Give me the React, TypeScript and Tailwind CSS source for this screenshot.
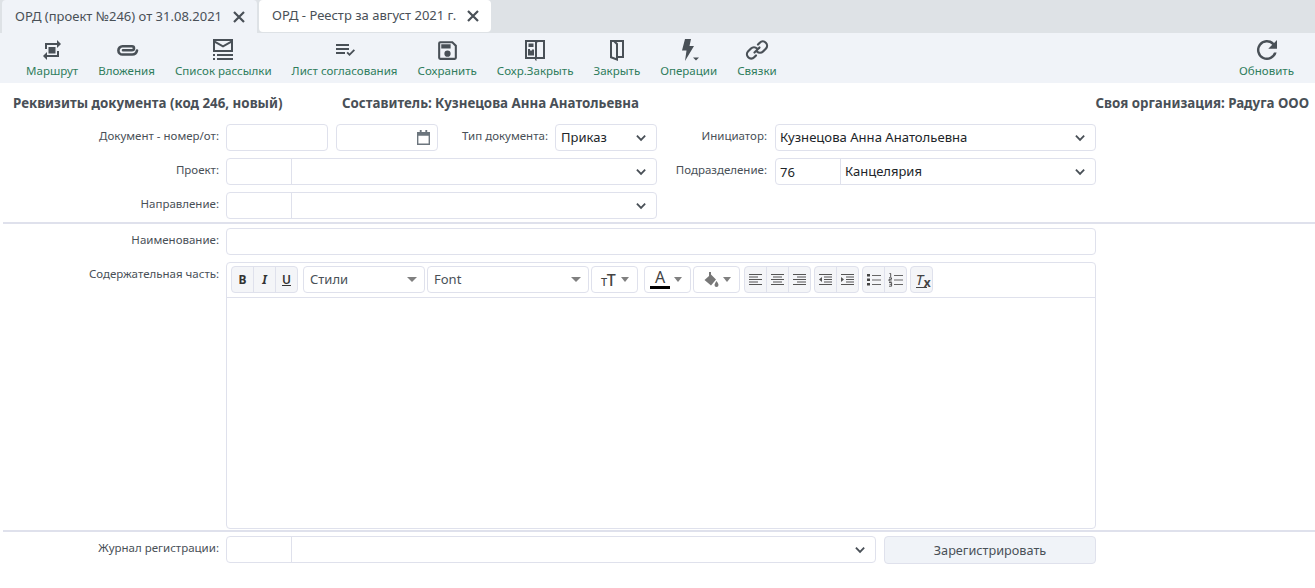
import React from "react";

const ico = "fill-[#495057]";
const I = ({ children, s = 24 }: { children: React.ReactNode; s?: number }) => (
  <svg viewBox="0 0 24 24" width={s} height={s} className={ico}>{children}</svg>
);

const icons: Record<string, React.ReactNode> = {
  route: <I><path d="M7 7h10v3l4-4-4-4v3H5v6h2V7zm10 10H7v-3l-4 4 4 4v-3h12v-6h-2v4z" /><rect x="8.500" y="9" width="7" height="6.500" /></I>,
  clip: (
    <svg viewBox="0 0 24 24" width={24} height={24} fill="none" stroke="#495057" strokeWidth="2.600" strokeLinecap="round">
      <path d="M8 12.300h9a2 2 0 0 0 0-4H7.500a4 4 0 0 0 0 8.200h9.500a5 5 0 0 0 5-4" />
    </svg>
  ),
  list: (
    <svg viewBox="0 0 24 24" width={24} height={24} className={ico}>
      <path fillRule="evenodd" d="M2 1h20v13H2V1zm2 4v7h16V5l-8 4.500L4 5zm.5-2L12 7.200 19.500 3h-15z" />
      <rect x="2" y="16" width="2" height="2" /><rect x="6" y="16" width="16" height="2" />
      <rect x="2" y="20" width="2" height="2" /><rect x="6" y="20" width="16" height="2" />
    </svg>
  ),
  check: <I><path d="M3 6h13v2H3V6zm0 4h13v2H3v-2zm0 4h9v2H3v-2zm19-1.500L16.500 18l-3-3 1.300-1.300 1.700 1.700 4.200-4.200 1.300 1.300z" /></I>,
  save: <I s={25}><path d="M17 3H5a2 2 0 0 0-2 2v14a2 2 0 0 0 2 2h14a2 2 0 0 0 2-2V7l-4-4zm2 16H5V5h11.170L19 7.830V19zm-7-7a3 3 0 1 0 0 6 3 3 0 0 0 0-6zM6 6h9v4H6z" /></I>,
  saveClose: <I><path fillRule="evenodd" d="M2 2h20v19h-8.500v2L12 22V21H2V2zm2 2v15h8V4H4zm10 .5V19h6V4h-4.500L14 4.500z M5.500 5.500H10.500V9H5.500z M5 11h2v1.500H9v-1h2v6H5v-6z" /></I>,
  close: <I><path fillRule="evenodd" d="M5 2h14v18h-6v3l-8-3V2zm2 2v14.600l4 1.500V6.500L8.500 4H7zm4.500 0L13 5.500V18h4V4h-5.500z" /></I>,
  ops: (
    <svg viewBox="0 0 24 24" width={24} height={24} className={ico}>
      <path d="M8 1h6l-1.500 7H17L8 23l1.500-10.500H5z" /><path d="M16 19.500h6l-3 3z" />
    </svg>
  ),
  link: (
    <svg viewBox="0 0 24 24" width={24} height={24} fill="none" stroke="#495057" strokeWidth="2.200" strokeLinecap="round">
      <path d="M9.500 14.500l5-5" />
      <path d="M13 6.500l1.800-1.800a4.200 4.200 0 0 1 6 6L18 13.500a4.200 4.200 0 0 1-6 0" />
      <path d="M11 17.500l-1.800 1.800a4.200 4.200 0 0 1-6-6L6 10.500a4.200 4.200 0 0 1 6 0" />
    </svg>
  ),
  refresh: <svg viewBox="0 0 24 24" width={30} height={30} className={`${ico} shrink-0`}><path d="M17.650 6.350A8 8 0 1 0 19.700 14h-2.100a6 6 0 1 1-1.400-6.200L13 11h7V4l-2.350 2.350z" /></svg>,
};

const Tool = ({ icon, label }: { icon: string; label: string }) => (
  <div className="flex flex-col items-center">
    <div className="h-[26px] flex items-center justify-center">{icons[icon]}</div>
    <div className="text-[11.560px] leading-[15px] text-[#2f7d5c] whitespace-nowrap">{label}</div>
  </div>
);

const X = () => (
  <svg viewBox="0 0 12 12" width={12} height={12} fill="none" stroke="#495057" strokeWidth="2.200"><path d="M1 1l10 10M11 1L1 11" /></svg>
);

const Chevron = () => (
  <svg viewBox="0 0 12 8" width={11} height={8} fill="none" stroke="#495057" strokeWidth="2" className="shrink-0"><path d="M1 1.500l4.500 4.500 4.500-4.500" /></svg>
);

const box = "h-[27px] bg-white border border-[#dfe1ec] rounded-[4px]";

const Label = ({ w, children }: { w: string; children: React.ReactNode }) => (
  <div className={`${w} shrink-0 text-right text-[11.500px] leading-[24px] text-[#495057] whitespace-nowrap`}>{children}</div>
);

const Combo = ({ w, code, value }: { w: string; code?: string; value?: string }) => (
  <div className={`${box} ${w} flex items-center pr-[9px] text-[13px] text-[#212529] shrink-0`}>
    <div className="w-[65px] h-full border-r border-[#dfe1ec] pl-[4px] leading-[27px] shrink-0">{code}</div>
    <div className="flex-1 pl-[4px] leading-[27px]">{value}</div>
    <Chevron />
  </div>
);

const Drop = ({ w, children }: { w: string; children: React.ReactNode }) => (
  <div className={`${w} h-[27px] shrink-0 flex items-center justify-between pl-[6px] pr-[7px] border border-[#dfe1ec] rounded-[4px] bg-white text-[13px] text-[#495057]`}>
    {children}
    <span className="w-0 h-0 border-x-[5px] border-x-transparent border-t-[5px] border-t-[#808080]" />
  </div>
);

const SmallDrop = ({ pl, children }: { pl: string; children: React.ReactNode }) => (
  <div className={`w-[47px] ${pl} h-[27px] shrink-0 flex items-center justify-between pr-[8px] border border-[#dfe1ec] rounded-[4px] bg-white text-[#444]`}>
    {children}
    <span className="w-0 h-0 border-x-[4px] border-x-transparent border-t-[5px] border-t-[#808080]" />
  </div>
);

const Btn = ({ children }: { children: React.ReactNode }) => (
  <div className="flex-1 h-full flex items-center justify-center border-r last:border-r-0 border-[#dfe1ec]">{children}</div>
);

const Group = ({ w, children }: { w: string; children: React.ReactNode }) => (
  <div className={`${w} h-[27px] flex shrink-0 border border-[#dfe1ec] rounded-[4px] bg-[#f4f5f8]`}>{children}</div>
);

const Lines = ({ kind }: { kind: "l" | "c" | "r" }) => {
  const rows = [[1, 13], [3, 9], [1, 13], [3, 9], [1, 13]];
  return (
    <svg viewBox="0 0 15 13" width={15} height={13}>
      {rows.map(([x, w], i) => {
        const left = kind === "c" ? x : kind === "r" ? 14 - w : 1;
        return <rect key={i} x={left} y={i * 2.500 + 1} width={w} height="1" fill="#555" />;
      })}
    </svg>
  );
};

const Indent = ({ out }: { out?: boolean }) => (
  <svg viewBox="0 0 15 13" width={15} height={13} fill="#555">
    <rect x="1" y="1" width="13" height="1" /><rect x="6" y="3.500" width="8" height="1" /><rect x="6" y="6" width="8" height="1" /><rect x="6" y="8.500" width="8" height="1" /><rect x="1" y="11" width="13" height="1" />
    <path d={out ? "M4 4l-3 2.500L4 9z" : "M1 4l3 2.500L1 9z"} />
  </svg>
);

const BulletList = () => (
  <svg viewBox="0 0 15 13" width={15} height={13} fill="#444">
    <rect x="1" y="1" width="3" height="2.500" /><rect x="1" y="5.500" width="3" height="2.500" /><rect x="1" y="10" width="3" height="2.500" />
    <rect x="6" y="2" width="9" height="1" fill="#666" /><rect x="6" y="6.500" width="9" height="1" fill="#666" /><rect x="6" y="11" width="9" height="1" fill="#666" />
  </svg>
);

const NumList = () => (
  <svg viewBox="0 0 15 14" width={15} height={14}>
    <path d="M1.500 .5h1.200v3.500M1 4.800h2.500v1.500H1V8h2.700M1 9.500h2.600v3.700H1M1.500 11.300h2" fill="none" stroke="#444" strokeWidth=".9" />
    <rect x="6" y="2" width="9" height="1" fill="#666" /><rect x="6" y="6.500" width="9" height="1" fill="#666" /><rect x="6" y="11" width="9" height="1" fill="#666" />
  </svg>
);

const Fill = () => (
  <svg viewBox="0 0 16 16" width={16} height={16} fill="#777">
    <path d="M6 0h2v2.500l5 5-5 6-6.500-5.500L6 4z" /><path d="M13.500 9c.9 1.500 2 2.700 2 4a2 2 0 0 1-4 0c0-1 1-2.500 2-4z" />
  </svg>
);

export default function App() {
  return (
    <div className="w-[1315px] h-[588px] bg-white overflow-hidden font-['Noto_Sans','Open_Sans',sans-serif]">
      <div className="h-[33px] bg-[#dee2e6] flex pl-[2px] gap-[2px]">
        <div className="w-[255px] h-[33px] bg-[#f0f3f8] rounded-t-[4px] flex items-center justify-between pl-[13px] pr-[12px] text-[13px] text-[#495057]">
          <span className="whitespace-nowrap">ОРД (проект №246) от 31.08.2021</span><X />
        </div>
        <div className="w-[232px] h-[32px] bg-white rounded-[4px] flex items-center justify-between pl-[13px] pr-[12px] text-[13px] text-[#495057]">
          <span className="whitespace-nowrap">ОРД - Реестр за август 2021 г.</span><X />
        </div>
      </div>

      <div className="h-[50px] bg-[#f0f3f8] flex items-start justify-between pl-[26px] pr-[21px] pt-[4px]">
        <div className="flex gap-[20px]">
          <Tool icon="route" label="Маршрут" />
          <Tool icon="clip" label="Вложения" />
          <Tool icon="list" label="Список рассылки" />
          <Tool icon="check" label="Лист согласования" />
          <Tool icon="save" label="Сохранить" />
          <Tool icon="saveClose" label="Сохр.Закрыть" />
          <Tool icon="close" label="Закрыть" />
          <Tool icon="ops" label="Операции" />
          <Tool icon="link" label="Связки" />
        </div>
        <Tool icon="refresh" label="Обновить" />
      </div>

      <div className="flex justify-between pl-[13px] pr-[6px] h-[41px] pt-[11px] text-[13.330px] leading-[18px] font-bold text-[#495057] whitespace-nowrap">
        <div className="flex">
          <div className="w-[329px]">Реквизиты документа (код 246, новый)</div>
          <div>Составитель: Кузнецова Анна Анатольевна</div>
        </div>
        <div>Своя организация: Радуга ООО</div>
      </div>

      <div className="flex flex-col gap-[7px]">
        <div className="flex items-start">
          <Label w="w-[219px]">Документ - номер/от:</Label>
          <div className={`${box} w-[102px] ml-[7px] shrink-0`} />
          <div className={`${box} w-[102px] ml-[8px] shrink-0 flex items-center justify-end pr-[7px]`}>
            <svg viewBox="0 0 14 16" width={13} height={15} fill="#6c757d"><path fillRule="evenodd" d="M3 0h2v2h4V0h2v2h3v14H0V2h3V0zM1.500 6v8.500h11V6h-11z" /></svg>
          </div>
          <Label w="w-[110px]">Тип документа:</Label>
          <div className={`${box} w-[102px] ml-[7px] shrink-0 flex items-center justify-between pl-[5px] pr-[9px] text-[13px] text-[#212529]`}>
            <span>Приказ</span><Chevron />
          </div>
          <Label w="w-[110px]">Инициатор:</Label>
          <div className={`${box} w-[321px] ml-[8px] shrink-0 flex items-center justify-between pl-[4px] pr-[9px] text-[13.100px] text-[#212529]`}>
            <span>Кузнецова Анна Анатольевна</span><Chevron />
          </div>
        </div>
        <div className="flex items-start">
          <Label w="w-[219px]">Проект:</Label>
          <div className="ml-[7px]"><Combo w="w-[431px]" /></div>
          <Label w="w-[110px]">Подразделение:</Label>
          <div className="ml-[8px]"><Combo w="w-[321px]" code="76" value="Канцелярия" /></div>
        </div>
        <div className="flex items-start">
          <Label w="w-[219px]">Направление:</Label>
          <div className="ml-[7px]"><Combo w="w-[431px]" /></div>
        </div>
      </div>

      <div className="h-[2px] bg-[#dfe1ec] ml-[3px] mt-[3px]" />

      <div className="flex items-start mt-[4px]">
        <Label w="w-[219px]">Наименование:</Label>
        <div className={`${box} w-[870px] ml-[7px]`} />
      </div>

      <div className="flex items-start mt-[7px]">
        <Label w="w-[219px]">Содержательная часть:</Label>
        <div className="w-[870px] h-[267px] ml-[7px] border border-[#dfe1ec] rounded-[4px] flex flex-col">
          <div className="h-[35px] border-b border-[#dfe1ec] flex items-start gap-[2px] pl-[4px] pt-[3px]">
            <Group w="w-[67px] mr-[3px]">
              <Btn><span className="text-[12px] font-bold text-[#333]">B</span></Btn>
              <Btn><span className="text-[12px] italic font-bold text-[#333]">I</span></Btn>
              <Btn><span className="text-[12px] underline font-semibold text-[#333]">U</span></Btn>
            </Group>
            <Drop w="w-[122px]">Стили</Drop>
            <Drop w="w-[162px]">Font</Drop>
            <SmallDrop pl="pl-[9px]"><span className="font-medium tracking-[-0.5px] leading-none"><span className="text-[11px]">T</span><span className="text-[16px]">T</span></span></SmallDrop>
            <div className="w-[2px]" />
            <SmallDrop pl="pl-[5px]">
              <span className="flex flex-col items-center w-[20px] -mt-[1px] text-[16px] leading-[16px]">A<span className="w-[20px] h-[3px] bg-black mt-[1px]" /></span>
            </SmallDrop>
            <SmallDrop pl="pl-[9px]"><Fill /></SmallDrop>
            <Group w="w-[67px] ml-[2px]"><Btn><Lines kind="l" /></Btn><Btn><Lines kind="c" /></Btn><Btn><Lines kind="r" /></Btn></Group>
            <Group w="w-[45px] ml-[1px]"><Btn><Indent out /></Btn><Btn><Indent /></Btn></Group>
            <Group w="w-[45px] ml-[1px]"><Btn><BulletList /></Btn><Btn><NumList /></Btn></Group>
            <Group w="w-[23px] ml-[1px]"><Btn><span className="relative text-[15px] leading-[15px] italic text-[#444] pr-[4px]">T<span className="absolute left-0 top-[15px] w-[11px] h-px bg-[#444]" /><span className="absolute left-[8px] top-[5px] text-[12px] not-italic font-bold leading-[12px]">x</span></span></Btn></Group>
          </div>
          <div className="flex-1" />
        </div>
      </div>

      <div className="h-[2px] bg-[#dfe1ec] ml-[3px] mt-[1px]" />

      <div className="flex items-start mt-[4px]">
        <Label w="w-[219px]">Журнал регистрации:</Label>
        <div className="ml-[7px]"><Combo w="w-[650px]" /></div>
        <div className="w-[212px] h-[28px] ml-[8px] bg-[#f0f3f8] border border-[#dfe1ec] rounded-[4px] text-center text-[12.700px] leading-[27px] text-[#495057]">Зарегистрировать</div>
      </div>
    </div>
  );
}
